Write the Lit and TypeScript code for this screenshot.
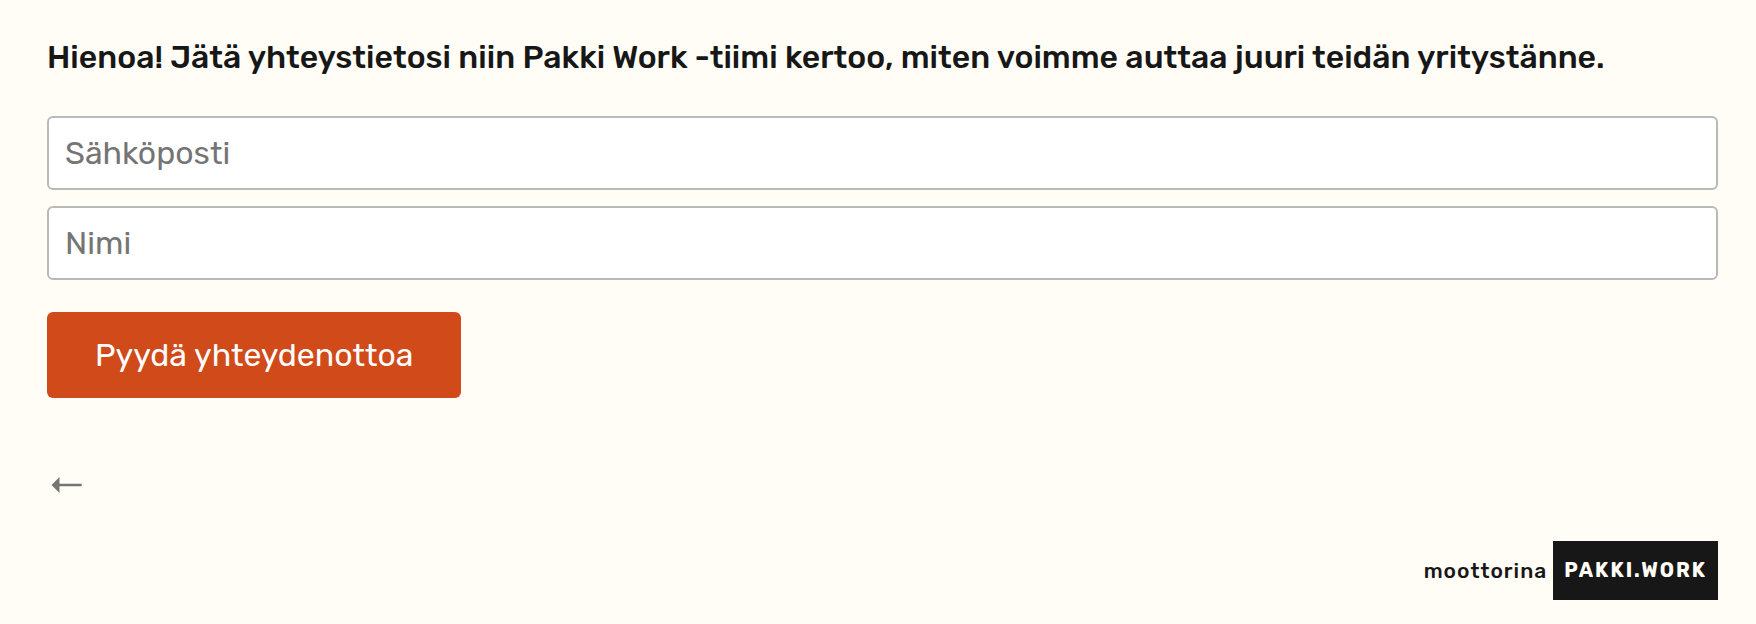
import { LitElement, html, css } from "lit";
import { customElement } from "lit/decorators.js";

@customElement("app-root")
export class AppRoot extends LitElement {
  static styles = css`
    :host {
      display: block;
      box-sizing: border-box;
      min-height: 100vh;
      padding: 40px 38px 24px 47px;
      background: #fffdf6;
      color: #171717;
      font-family: Rubik, Roboto, Inter, sans-serif;
      font-size: 32px;
      line-height: 36px;
    }
    h1 { margin: 0 0 42px; font-size: 32px; line-height: 34px; font-weight: 500; }
    form { display: flex; flex-direction: column; align-items: flex-start; gap: 16px; }
    .field { box-sizing: border-box; width: 100%; height: 74px; padding: 0 16px; border: 2px solid #b9b9b9; border-radius: 6px; background: #fff; color: inherit; font: inherit; }
    .field::placeholder { color: #757575; opacity: 1; }
    .submit { margin-top: 16px; height: 86px; padding: 0 48px; border: 0; border-radius: 6px; background: #d04a1a; color: #fff; font: inherit; }
    .back { display: block; margin-top: 77px; padding: 0 4px; border: 0; background: none; }
    .back svg { display: block; }
    footer { display: flex; justify-content: flex-end; align-items: center; gap: 6px; margin-top: 46px; font-size: 21px; line-height: 25px; letter-spacing: 1px; font-weight: 500; }
    .brand { padding: 17px 11px; background: #171717; color: #fffdf6; font-size: 20px; font-weight: 700; letter-spacing: 2px; text-decoration: none; }
  `;

  render() {
    return html`
      <h1>Hienoa! Jätä yhteystietosi niin Pakki Work -tiimi kertoo, miten voimme auttaa juuri teidän yritystänne.</h1>
      <form>
        <input class="field" type="email" placeholder="Sähköposti" aria-label="Sähköposti" />
        <input class="field" type="text" placeholder="Nimi" aria-label="Nimi" />
        <button class="submit" type="button">Pyydä yhteydenottoa</button>
      </form>
      <button class="back" type="button" aria-label="Takaisin">
        <svg width="31" height="20" viewBox="0 0 31 20"><path d="M.5 10 8.5 2v16zM8 8.7h22.7v2.6H8z" fill="#757575" /></svg>
      </button>
      <footer><span>moottorina</span><a class="brand" href="#">PAKKI.WORK</a></footer>
    `;
  }
}
